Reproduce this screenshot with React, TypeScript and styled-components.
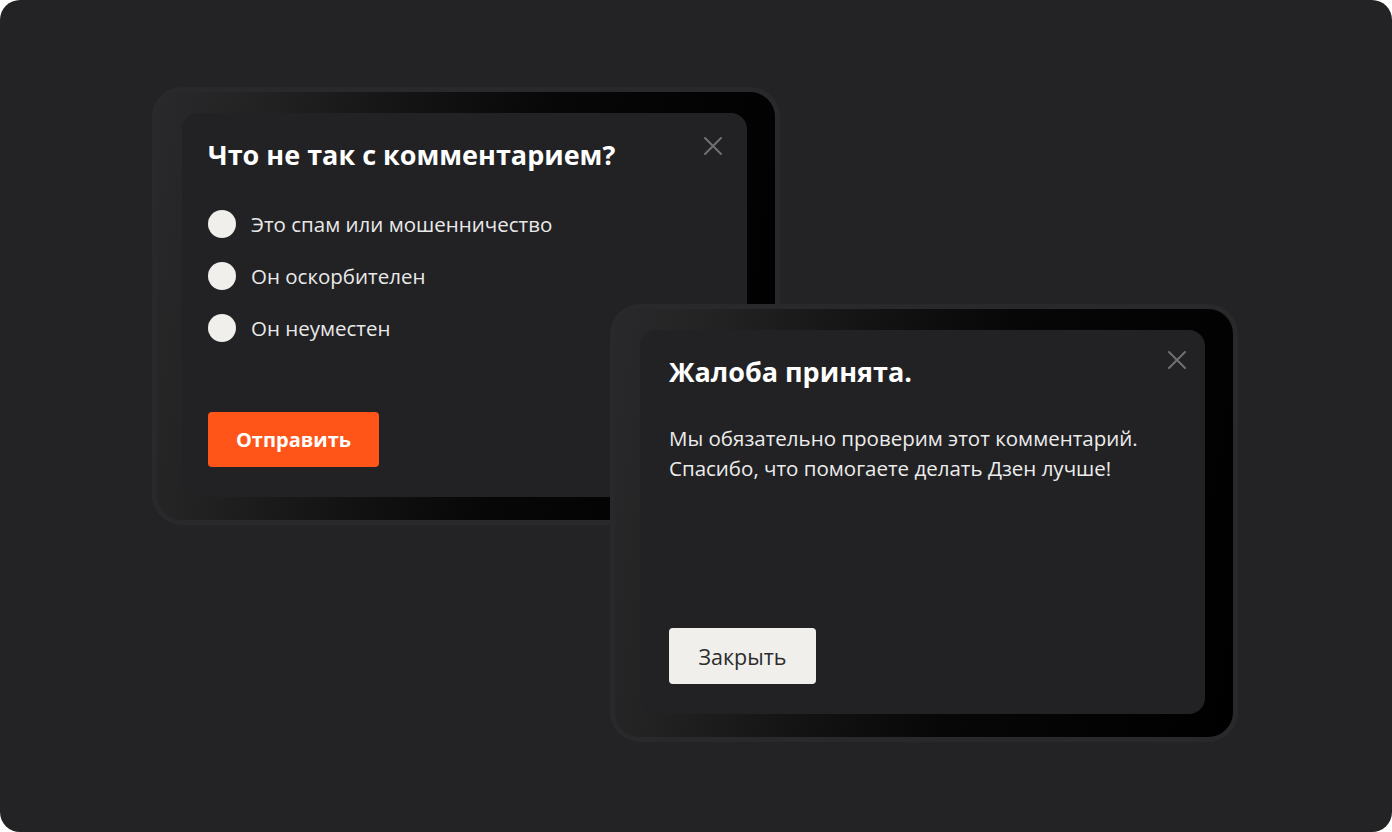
import { createGlobalStyle } from "styled-components";
import styled from "styled-components";

const GlobalStyle = createGlobalStyle`
  html, body {
    margin: 0;
    padding: 0;
    background: #ffffff;
  }
  * {
    box-sizing: border-box;
  }
`;

const font = `"Open Sans", "Noto Sans", sans-serif`;

const Stage = styled.div`
  width: 1392px;
  height: 832px;
  background: #232325;
  border-radius: 20px;
  overflow: hidden;
  display: flex;
  flex-direction: column;
  align-items: flex-start;
  padding: 87px 0 0 152px;
  font-family: ${font};
`;

const Bezel = styled.div<{ $shiftX?: number; $shiftY?: number; $layer: number }>`
  position: relative;
  z-index: ${(p) => p.$layer};
  width: 628px;
  height: 438px;
  margin-left: ${(p) => p.$shiftX || 0}px;
  margin-top: ${(p) => p.$shiftY || 0}px;
  border-radius: 30px;
  border: 5px solid #29292b;
  padding: 21px 28px 23px 25px;
  background: linear-gradient(
    100deg,
    #29292b 0%,
    #232324 14%,
    #141414 36%,
    #070707 58%,
    #000000 100%
  );
`;

const Panel = styled.div<{ $inset: number }>`
  position: relative;
  width: 565px;
  height: 384px;
  background: #222224;
  border-radius: 16px;
  display: flex;
  flex-direction: column;
  align-items: flex-start;
  padding: 26px 26px 30px ${(p) => p.$inset}px;
`;

const Title = styled.h2`
  margin: 0;
  font-size: 27px;
  line-height: 32px;
  font-weight: 700;
  color: #ffffff;
`;

const CloseButton = styled.button<{ $top: number; $right: number }>`
  position: absolute;
  top: ${(p) => p.$top}px;
  right: ${(p) => p.$right}px;
  width: 20px;
  height: 20px;
  padding: 0;
  border: none;
  background: transparent;
  display: flex;
  align-items: center;
  justify-content: center;
`;

const Options = styled.div`
  margin-top: 39px;
  display: flex;
  flex-direction: column;
  gap: 24px;
`;

const Option = styled.label`
  display: flex;
  align-items: center;
  gap: 15px;
  font-size: 20.5px;
  line-height: 28px;
  color: #e9e9e9;
`;

const Dot = styled.span`
  width: 28px;
  height: 28px;
  border-radius: 50%;
  background: #f0efeb;
  flex-shrink: 0;
`;

const Message = styled.p`
  margin: 35px 0 0;
  font-size: 20.5px;
  line-height: 30px;
  color: #ececec;
`;

const ActionButton = styled.button<{ $primary?: boolean; $w: number; $h: number }>`
  margin-top: auto;
  width: ${(p) => p.$w}px;
  height: ${(p) => p.$h}px;
  padding: 0;
  border: none;
  border-radius: 4px;
  font-family: ${font};
  font-size: ${(p) => (p.$primary ? 20 : 21.5)}px;
  font-weight: ${(p) => (p.$primary ? 700 : 400)};
  color: ${(p) => (p.$primary ? "#ffffff" : "#2c2c2c")};
  background: ${(p) => (p.$primary ? "#ff5518" : "#f0efeb")};
`;

const CloseIcon = () => (
  <svg width="20" height="20" viewBox="0 0 20 20">
    <path d="M2 2 L18 18 M18 2 L2 18" stroke="#707072" strokeWidth="2" strokeLinecap="round" />
  </svg>
);

const reasons = ["Это спам или мошенничество", "Он оскорбителен", "Он неуместен"];

export default function App() {
  return (
    <>
      <GlobalStyle />
      <Stage>
        <Bezel $layer={1}>
          <Panel $inset={26}>
            <CloseButton $top={23} $right={24}>
              <CloseIcon />
            </CloseButton>
            <Title>Что не так с комментарием?</Title>
            <Options>
              {reasons.map((r) => (
                <Option key={r}>
                  <Dot />
                  {r}
                </Option>
              ))}
            </Options>
            <ActionButton $primary $w={171} $h={55}>
              Отправить
            </ActionButton>
          </Panel>
        </Bezel>
        <Bezel $layer={2} $shiftX={458} $shiftY={-221}>
          <Panel $inset={29}>
            <CloseButton $top={20} $right={18}>
              <CloseIcon />
            </CloseButton>
            <Title>Жалоба принята.</Title>
            <Message>
              Мы обязательно проверим этот комментарий.
              <br />
              Спасибо, что помогаете делать Дзен лучше!
            </Message>
            <ActionButton $w={147} $h={56}>
              Закрыть
            </ActionButton>
          </Panel>
        </Bezel>
      </Stage>
    </>
  );
}
